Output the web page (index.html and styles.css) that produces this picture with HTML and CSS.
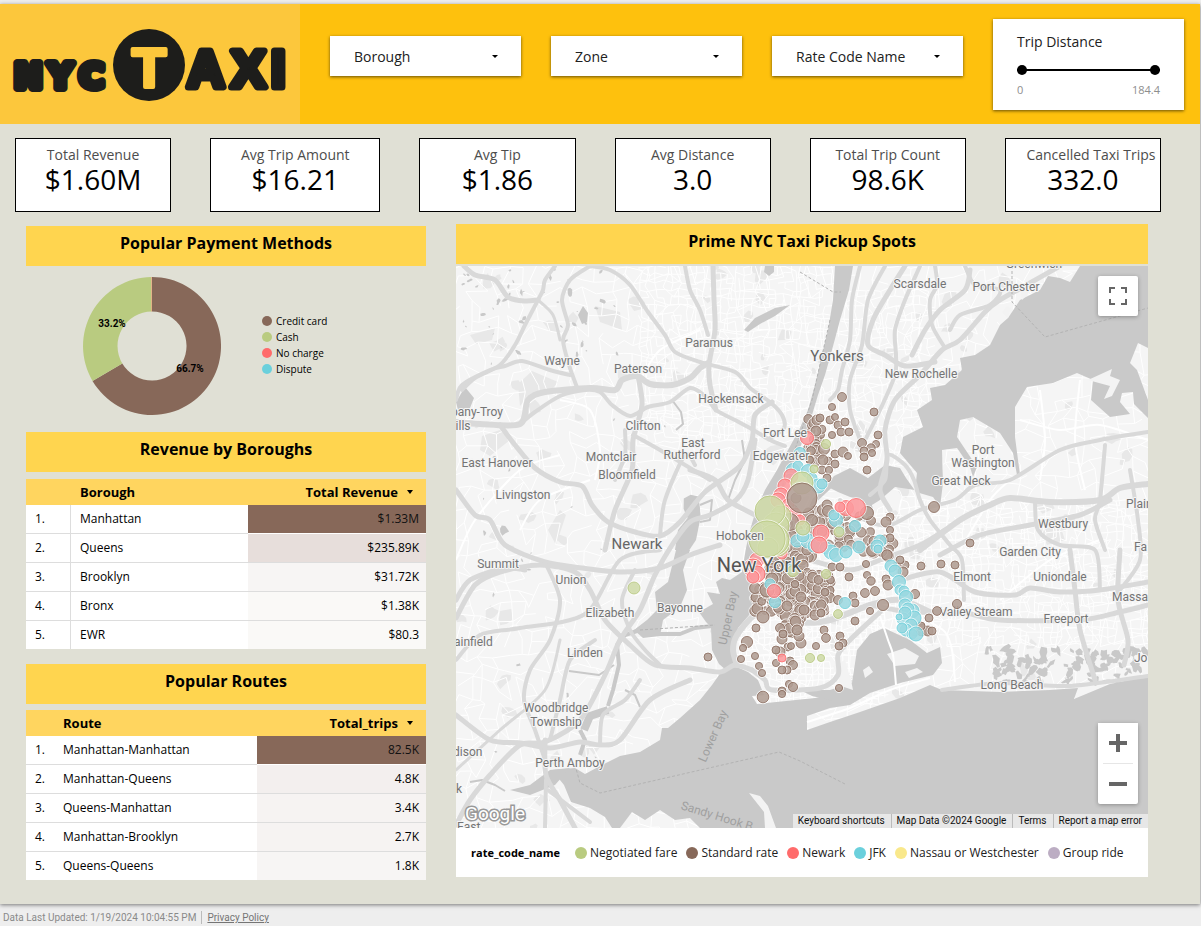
FILE: index.html
```html
<!DOCTYPE html>
<html lang="en">
<head>
<meta charset="utf-8">
<meta name="viewport" content="width=device-width, initial-scale=1">
<title>NYC Taxi Dashboard</title>
<link rel="stylesheet" href="styles.css">
</head>
<body>
<main class="report">
  <header class="header">
    <svg class="logo" viewBox="0 0 300 120" role="img" aria-label="NYC Taxi">
      <g class="logo-nyc"><text x="14" y="84">N</text><text x="48" y="84">Y</text><text x="79" y="84">C</text></g>
      <circle cx="149" cy="61" r="36" fill="#1d1d1b"/>
      <text class="logo-t" x="149" y="83">T</text>
      <g class="logo-axi"><text x="187" y="83">A</text><text x="231" y="83">X</text><text x="271" y="83">I</text></g>
    </svg>
    <div class="filters">
      <div class="filter"><select aria-label="Borough"><option>Borough</option></select><svg class="caret" viewBox="0 0 6 3"><path d="M0 0h6L3 3z"/></svg></div>
      <div class="filter"><select aria-label="Zone"><option>Zone</option></select><svg class="caret" viewBox="0 0 6 3"><path d="M0 0h6L3 3z"/></svg></div>
      <div class="filter"><select aria-label="Rate Code Name"><option>Rate Code Name</option></select><svg class="caret" viewBox="0 0 6 3"><path d="M0 0h6L3 3z"/></svg></div>
      <div class="distance">
        <label class="distance-label" for="dist-min">Trip Distance</label>
        <div class="range">
          <input id="dist-min" type="range" min="0" max="184.4" step="0.1" value="0">
          <input type="range" min="0" max="184.4" step="0.1" value="184.4" aria-label="Maximum trip distance">
        </div>
        <div class="range-ends"><span>0</span><span>184.4</span></div>
      </div>
    </div>
  </header>

  <section class="kpis">
    <div class="kpi"><div class="kpi-label">Total Revenue</div><div class="kpi-value">$1.60M</div></div>
    <div class="kpi"><div class="kpi-label">Avg Trip Amount</div><div class="kpi-value">$16.21</div></div>
    <div class="kpi"><div class="kpi-label">Avg Tip</div><div class="kpi-value">$1.86</div></div>
    <div class="kpi"><div class="kpi-label">Avg Distance</div><div class="kpi-value">3.0</div></div>
    <div class="kpi"><div class="kpi-label">Total Trip Count</div><div class="kpi-value">98.6K</div></div>
    <div class="kpi"><div class="kpi-label kpi-label-long">Cancelled Taxi Trips</div><div class="kpi-value">332.0</div></div>
  </section>

  <div class="columns">
    <div class="left">
      <h2 class="title">Popular Payment Methods</h2>
      <div class="payments">
        <svg class="donut" viewBox="-69 -69 138 138" role="img" aria-label="Payment methods">
          <path fill="#876859" d="M0-69A69 69 0 1 1-59.5 34.9L-29.7 17.5A34.5 34.5 0 1 0 0-34.5z"/>
          <path fill="#b9cb80" d="M-59.5 34.9A69 69 0 0 1-.7-69L-.3-34.5A34.5 34.5 0 0 0-29.7 17.5z"/>
          <path stroke="#f0a070" stroke-width=".6" d="M-.5-69v34.5"/>
          <text x="-40" y="-19">33.2%</text><text x="38" y="26">66.7%</text>
        </svg>
        <ul class="pay-legend">
          <li><i class="dot brown"></i>Credit card</li>
          <li><i class="dot green"></i>Cash</li>
          <li><i class="dot red"></i>No charge</li>
          <li><i class="dot blue"></i>Dispute</li>
        </ul>
      </div>

      <h2 class="title">Revenue by Boroughs</h2>
      <table class="data boroughs">
        <thead><tr><th class="num"></th><th>Borough</th><th class="val">Total Revenue<svg class="sort" viewBox="0 0 6 4"><path d="M0 0h6L3 4z"/></svg></th></tr></thead>
        <tbody>
          <tr><td class="num">1.</td><td>Manhattan</td><td class="val h1">$1.33M</td></tr>
          <tr><td class="num">2.</td><td>Queens</td><td class="val h2">$235.89K</td></tr>
          <tr><td class="num">3.</td><td>Brooklyn</td><td class="val h4">$31.72K</td></tr>
          <tr><td class="num">4.</td><td>Bronx</td><td class="val h5">$1.38K</td></tr>
          <tr><td class="num">5.</td><td>EWR</td><td class="val h5">$80.3</td></tr>
        </tbody>
      </table>

      <h2 class="title">Popular Routes</h2>
      <table class="data routes">
        <thead><tr><th class="num"></th><th>Route</th><th class="val">Total_trips<svg class="sort" viewBox="0 0 6 4"><path d="M0 0h6L3 4z"/></svg></th></tr></thead>
        <tbody>
          <tr><td class="num">1.</td><td>Manhattan-Manhattan</td><td class="val h1">82.5K</td></tr>
          <tr><td class="num">2.</td><td>Manhattan-Queens</td><td class="val h3">4.8K</td></tr>
          <tr><td class="num">3.</td><td>Queens-Manhattan</td><td class="val h6">3.4K</td></tr>
          <tr><td class="num">4.</td><td>Manhattan-Brooklyn</td><td class="val h6">2.7K</td></tr>
          <tr><td class="num">5.</td><td>Queens-Queens</td><td class="val h4">1.8K</td></tr>
        </tbody>
      </table>
    </div>

    <div class="right">
      <h2 class="title">Prime NYC Taxi Pickup Spots</h2>
      <div class="map">
        <svg class="map-canvas" viewBox="456 266 692 562" preserveAspectRatio="xMidYMid slice">
          <g id="parks" fill="#e8e8e8"></g>
          <g id="streets" fill="none" stroke="#fff" stroke-width="1"></g>
          <g id="ponds" fill="#c9c9c9"></g>
          <g fill="#c9c9c9">
            <path d="M835 266L833 300 828 330 822 355 815 385 808 410 799 430 788 450 777 470 765 490 756 510 750 530 746 548 742 572 730 580 722 578 716 582 720 594 707 592 713 604 699 612 706 622 711 627 712 650 719 664 726 670 737 664 733 645 738 628 750 614 756 600 753 585 762 565 770 530 776 505 790 475 803 440 812 415 818 395 825 375 832 350 840 320 849 290 853 266z"/>
            <path d="M676 550L690 550 683 570 687 590 680 607 663 620 660 636 643 638 634 630 647 620 657 610 655 592 668 582z"/>
            <path d="M675 550L678 530 690 515 700 520 696 540 688 552z"/>
            <path d="M724 668L712 685 700 700 680 718 668 728 662 728 660 740 640 752 620 756 600 766 585 774 575 768 552 770 564 785 571 802 590 808 605 817 612 828 620 828 632 812 645 820 660 810 675 820 690 818 700 828 1148 828 1148 676 1110 684 1074 699 1078 688 1050 690 1000 692 942 690 930 685 900 698 860 712 830 722 807 730 807 716 830 708 850 705 842 692 815 698 757 704 752 696 764 695 758 680 748 672 737 667z"/>
            <path d="M800 690L812 696 850 705 870 693 900 683 933 675 942 663 940 647 927 653 910 640 884 628 870 634 857 650 852 683 830 690z"/>
            <path d="M1080 266L1070 282 1060 278 1048 276 1040 290 1020 300 1008 318 1000 325 990 345 975 355 960 358 962 370 945 385 930 388 932 400 917 410 923 427 903 437 900 453 917 473 915 490 895 487 880 500 872 505 874 515 868 522 862 500 850 497 838 492 826 486 834 476 850 468 868 478 885 465 900 468 906 478 916 492 933 497 940 507 943 483 942 450 957 448 970 467 973 477 977 467 957 437 960 420 973 417 1000 433 1013 453 1017 475 1020 475 1015 437 1015 407 1027 387 1053 383 1077 373 1093 380 1091 400 1110 417 1130 414 1120 402 1122 393 1133 392 1134 404 1148 418 1148 400 1137 370 1130 363 1138 343 1148 348 1148 266z"/>
            <path d="M456 402L465 387 474 398 470 408 458 410zM744 330L755 318 775 308 790 305 775 316 760 324 748 332zM765 266h9l0 6-5 4-5-4zM578 315l5-9 5 7-1 9-5 2zM530 795L555 785 570 768 550 770 530 785 510 790z"/>
          </g>
          <g fill="none" stroke="#c9c9c9" stroke-linejoin="round">
            <path stroke-width="4" d="M655 634L680 634 695 628 712 626M640 630L625 635 617 645 619 665 613 690 608 706M580 730L585 740 580 755"/>
            <path stroke-width="8" d="M608 710L590 716 584 730"/>
            <path stroke-width="5" d="M832 484L815 500 804 525 792 545 770 562"/>
            <path stroke-width="2" d="M672 400L681 412 683 424 676 430M742 440L745 460 735 480 728 500M700 505l12-5-2 20-10 2M505 791L495 785 482 780 470 782M614 665l-15 10-30-4M625 690l10 5 5 12"/>
          </g>
          <g fill="#f3f3f3">
            <path d="M1088 380L1112 369 1110 376 1120 380 1112 396 1104 399 1110 386z"/>
            <path d="M749 793L760 796 768 806 776 828 765 828 764 812z"/>
            <path d="M887 654l18-6 14 8-4 8-20 2zM905 672l12-4 6 4-14 6zM863 670l6-4 4 6-8 6zM845 660l6 20 2 10-12-4-8-20z"/>
            <path d="M1020 290l6-4 2 8-6 6zM1002 312l5-6 4 2-3 10z"/>
          </g>
          <g id="marsh" fill="#c9c9c9"></g>
          <g id="minor" fill="none" stroke="#fff" stroke-width="2" stroke-linejoin="round"></g>
          <g id="roads" fill="none" stroke="#d9d9d9" stroke-linecap="round" stroke-linejoin="round"></g>
          <g fill="none" stroke="#b3b3b3" stroke-width="1" stroke-dasharray="3 2">
            <path d="M575 765L580 783 600 793 779 752 800 761 845 784M800 272L833 292 841 292M830 320L812 400 788 470 760 550M1012 266L1012 302 1045 337 1148 308M640 630L715 625"/>
          </g>
          <g id="labels" class="map-labels"></g>
          <g id="pickups"></g>
          <g class="map-labels map-city">
            <text x="759" y="572" class="metro">New York</text>
            <text x="781" y="460">Edgewater</text>
            <text x="785" y="437">Fort Lee</text>
            <text x="740" y="540">Hoboken</text>
          </g>
        </svg>
        <button class="map-button fullscreen" aria-label="Toggle fullscreen view"><svg viewBox="0 0 18 18" width="18" height="18"><path d="M0 0v6h2V2h4V0zM16 0h-4v2h4v4h2V0zM16 16h-4v2h6v-6h-2zM2 12H0v6h6v-2H2z"/></svg></button>
        <div class="zoom">
          <button class="map-button" aria-label="Zoom in"><svg viewBox="0 0 18 18" width="18" height="18"><path d="M18 7h-7V0H7v7H0v4h7v7h4v-7h7z"/></svg></button>
          <button class="map-button" aria-label="Zoom out"><svg viewBox="0 0 18 18" width="18" height="18"><path d="M0 7h18v4H0z"/></svg></button>
        </div>
        <div class="google">Google</div>
        <div class="attribution"><button>Keyboard shortcuts</button><span>Map Data ©2024 Google</span><a href="#">Terms</a><a href="#">Report a map error</a></div>
      </div>
      <ul class="map-legend">
        <li class="legend-name">rate_code_name</li>
        <li><i class="dot green"></i>Negotiated fare</li>
        <li><i class="dot brown"></i>Standard rate</li>
        <li><i class="dot red"></i>Newark</li>
        <li><i class="dot blue"></i>JFK</li>
        <li><i class="dot yellow"></i>Nassau or Westchester</li>
        <li><i class="dot purple"></i>Group ride</li>
      </ul>
    </div>
  </div>
</main>
<footer class="footer"><span>Data Last Updated: 1/19/2024 10:04:55 PM</span><a href="#">Privacy Policy</a></footer>
<script src="map.js"></script>
</body>
</html>
```

FILE: styles.css
```css
* { box-sizing: border-box; }
body { margin: 0; padding-top: 4px; background: #eee; font-family: "Open Sans", "Noto Sans", sans-serif; color: #000; }
ul { list-style: none; margin: 0; padding: 0; }
button { border: 0; padding: 0; font: inherit; color: inherit; background: none; cursor: pointer; }

.report { margin-right: 1px; padding-bottom: 24px; background: #e0e0d5; box-shadow: 0 1px 4px rgba(0,0,0,.5); }

.header { display: flex; height: 120px; background: #fec10d; }
.logo { flex: none; width: 300px; height: 120px; background: #fcc73c; }
.logo text { font-family: "Liberation Sans", Arial, sans-serif; font-weight: 700; font-size: 52px; fill: #1d1d1b; stroke: #1d1d1b; stroke-width: 7px; stroke-linejoin: round; }
.logo .logo-nyc text { font-family: "DejaVu Sans", sans-serif; font-size: 34px; stroke-width: 8px; }
.logo .logo-t { font-size: 56px; text-anchor: middle; fill: #fcc73c; stroke: #fcc73c; stroke-width: 4px; }

.filters { flex: 1; display: grid; grid-template-columns: repeat(4, 1fr); gap: 30px; align-items: start; padding: 15px 16px 0 30px; }
.filter, .distance { background: #fff; box-shadow: 0 1px 3px rgba(0,0,0,.6); }
.filter { display: grid; align-items: center; height: 40px; margin-top: 17px; }
.filter > * { grid-area: 1 / 1; }
.filter select { width: 100%; height: 40px; padding: 0 40px 0 24px; border: 0; appearance: none; background: transparent; font: 14px "Open Sans", sans-serif; color: #212121; }
.caret { justify-self: end; width: 6px; height: 3px; margin-right: 23px; }
.distance { padding: 13px 24px 10px; }
.distance-label { display: block; font-size: 14px; line-height: 20px; color: #212121; }
.range { display: grid; align-items: center; height: 20px; margin-top: 8px; background: linear-gradient(#000, #000) center / 100% 2px no-repeat; }
.range input { grid-area: 1 / 1; width: 100%; height: 20px; margin: 0; appearance: none; background: none; pointer-events: none; }
.range input::-webkit-slider-thumb { appearance: none; width: 10px; height: 10px; border-radius: 50%; background: #000; pointer-events: auto; }
.range-ends { display: flex; justify-content: space-between; font-size: 11px; line-height: 20px; color: #8e8e8e; }

.kpis { display: grid; grid-template-columns: 156fr 170fr repeat(4, 156fr); gap: 39px; padding: 14px 39px 0 15px; }
.kpi { height: 74px; padding-top: 6px; border: 1px solid #000; background: #fff; text-align: center; white-space: nowrap; }
.kpi-label { font-size: 14px; line-height: 20px; color: #4d4d4d; }
.kpi-label-long { padding-left: 16px; }
.kpi-value { font-size: 28px; line-height: 28px; }

.columns { display: grid; grid-template-columns: 400fr 692fr; gap: 30px; padding: 12px 52px 0 26px; }
.left { padding-top: 2px; }
.title { margin: 0; padding: 5px 0 11px; background: #ffd54f; font-size: 16px; line-height: 24px; font-weight: 700; text-align: center; }

.payments { display: flex; align-items: flex-start; gap: 41px; height: 166px; padding: 11px 0 0 57px; }
.donut { width: 138px; height: 138px; }
.donut text { font: bold 10px Roboto, sans-serif; text-anchor: middle; }
.pay-legend { padding-top: 36px; font-size: 10px; line-height: 16px; }
.pay-legend li, .map-legend li { display: flex; align-items: center; }
.dot { flex: none; width: 10px; height: 10px; margin-right: 4px; border-radius: 50%; }
.brown { background: #876859; }
.green { background: #b9cb80; }
.red { background: #ff6b6b; }
.blue { background: #6bd0dc; }
.yellow { background: #f9e88b; }
.purple { background: #bcadc3; }

.data { width: 100%; border-collapse: separate; border-spacing: 0; table-layout: fixed; background: #fff; font-size: 12px; line-height: 16px; }
.data th { height: 26px; padding: 0 9px; background: #ffd55f; font-size: 13px; text-align: left; }
.data td { height: 29px; padding: 0 9px; border-bottom: 1px solid #ddd; }
.data tbody tr:last-child td { border-bottom: 0; height: 28px; }
.data .val { text-align: right; padding-right: 7px; }
.data th.val { padding-right: 13px; white-space: nowrap; }
.sort { width: 6px; height: 4px; margin-left: 9px; vertical-align: 3px; }
.boroughs { margin: 7px 0 15px; }
.boroughs .num { width: 45px; }
.boroughs td.num { border-right: 1px solid #ddd; }
.boroughs .val { width: 178px; }
.routes { margin-top: 6px; }
.routes .num { width: 28px; padding-right: 0; }
.routes .val { width: 169px; }
.data .h1 { background: #876859; border-color: #fff; background-clip: padding-box; color: #111; }
.data .h2 { background: #e7dedb; }
.data .h3 { background: #f3efee; }
.data .h4 { background: #f7f5f4; }
.data .h5 { background: #faf9f7; }
.data .h6 { background: #f6f3f2; }

.map { position: relative; height: 562px; margin-top: 2px; overflow: hidden; background: #f5f5f5; font-family: Roboto, sans-serif; }
.map-canvas { display: block; width: 100%; height: 100%; }
.map-labels text { font: 12px Roboto, sans-serif; fill: #747474; stroke: #f5f5f5; stroke-width: 2px; stroke-linejoin: round; paint-order: stroke; text-anchor: middle; }
.map-labels .start { text-anchor: start; }
.map-labels .city { font-size: 15px; fill: #666; }
.map-labels .metro { font-size: 20px; fill: #555; }
.map-labels .sea { fill: #a0a0a0; stroke: none; }
.map-button { display: grid; place-items: center; width: 40px; height: 40px; background: #fff; fill: #666; }
.fullscreen, .zoom { position: absolute; right: 10px; border-radius: 2px; background: #fff; box-shadow: 0 1px 4px rgba(0,0,0,.3); }
.fullscreen { top: 10px; }
.zoom { bottom: 24px; }
.zoom .map-button + .map-button { border-top: 1px solid #e6e6e6; width: 30px; height: 41px; margin: 0 5px; }
.google { position: absolute; left: 9px; bottom: 1px; font-family: Roboto, sans-serif; font-size: 19px; line-height: 26px; color: #fff; -webkit-text-stroke: 3px #999; paint-order: stroke fill; }
.attribution { position: absolute; right: 0; bottom: 0; display: flex; height: 14px; background: #e7e7e7; font-size: 10px; line-height: 14px; color: #111; white-space: nowrap; }
.attribution > * { padding: 0 6px 0 5px; color: inherit; text-decoration: none; }
.attribution > * + * { border-left: 1px solid #bbb; }
.map-legend { display: flex; align-items: center; flex-wrap: wrap; gap: 0 9px; min-height: 49px; padding: 0 15px; background: #fff; font-size: 12px; line-height: 16px; color: #212121; }
.map-legend .legend-name { margin-right: 6px; font-size: 11px; font-weight: 700; color: #000; }
.map-legend .dot { width: 12px; height: 12px; margin-right: 3px; }

.footer { display: flex; align-items: center; padding: 7px 3px 0; font: 10px/13px Roboto, sans-serif; color: #8a8a8a; }
.footer a { margin-left: 5px; padding-left: 5px; border-left: 1px solid #bbb; color: #757575; }
```

FILE: map.js
```js
const NS = 'http://www.w3.org/2000/svg';
function add(parent, tag, attrs, text) {
  const el = document.createElementNS(NS, tag);
  for (const k in attrs) el.setAttribute(k, attrs[k]);
  if (text) el.textContent = text;
  document.getElementById(parent).appendChild(el);
  return el;
}

let seed = 7;
function rnd() { seed = (seed * 16807) % 2147483647; return seed / 2147483647; }

// Smooth curve through a flat list of coordinates.
function smooth(str) {
  const n = str.split(/[ ,]+/).map(Number), p = [];
  for (let i = 0; i < n.length; i += 2) p.push([n[i], n[i + 1]]);
  let d = 'M' + p[0];
  for (let i = 0; i < p.length - 1; i++) {
    const a = p[i - 1] || p[i], b = p[i], c = p[i + 1], e = p[i + 2] || c;
    d += 'C' + [b[0] + (c[0] - a[0]) / 7, b[1] + (c[1] - a[1]) / 7, c[0] - (e[0] - b[0]) / 7, c[1] - (e[1] - b[1]) / 7, c[0], c[1]].map(v => v.toFixed(1)).join(' ');
  }
  return d;
}

function blob(x, y, r, stretch) {
  let d = '';
  const turn = rnd() * 3;
  for (let i = 0; i < 8; i++) {
    const a = i * Math.PI / 4, q = r * (0.5 + rnd() * 0.7);
    const u = Math.cos(a) * q, v = Math.sin(a) * q * stretch;
    d += (i ? 'L' : 'M') + (x + u * Math.cos(turn) - v * Math.sin(turn)).toFixed(1) + ' ' + (y + u * Math.sin(turn) + v * Math.cos(turn)).toFixed(1);
  }
  return d + 'z';
}

// Local street mesh: a jittered grid with gaps.
function mesh(x0, y0, x1, y1, step, jitter, keep) {
  const cols = Math.ceil((x1 - x0) / step), rows = Math.ceil((y1 - y0) / step), g = [];
  for (let r = 0; r <= rows; r++) {
    g.push([]);
    for (let c = 0; c <= cols; c++) g[r].push([(x0 + c * step + (rnd() - 0.5) * jitter).toFixed(1), (y0 + r * step + (rnd() - 0.5) * jitter).toFixed(1)]);
  }
  let d = '';
  for (let r = 0; r <= rows; r++) for (let c = 0; c <= cols; c++) {
    if (c < cols && rnd() < keep) d += 'M' + g[r][c] + 'L' + g[r][c + 1];
    if (r < rows && rnd() < keep) d += 'M' + g[r][c] + 'L' + g[r + 1][c];
  }
  add('streets', 'path', { d });
}
mesh(456, 266, 1148, 828, 13, 12, 0.7);
mesh(640, 266, 830, 440, 8, 4, 0.7);
mesh(740, 560, 880, 700, 6, 2, 0.8);
mesh(860, 500, 1148, 640, 8, 4, 0.75);
mesh(840, 290, 930, 470, 8, 5, 0.7);

let parks = '';
for (let i = 0; i < 150; i++) parks += blob(456 + rnd() * 692, 266 + rnd() * 562, 3 + rnd() * 8, 0.7);
parks += 'M595 306L620 312 622 330 600 322zM518 384L532 371 558 382 550 392 530 394 520 406zM482 436L500 430 510 440 490 456 480 450zM548 530L560 510 566 515 556 545zM470 335L495 328 492 340 476 344zM1040 530l20-5 5 15-18 5z';
add('parks', 'path', { d: parks });

let ponds = '';
for (let i = 0; i < 45; i++) ponds += blob(458 + rnd() * 170, 268 + rnd() * 105, 1 + rnd() * 3, 0.5);
for (let i = 0; i < 20; i++) ponds += blob(456 + rnd() * 240, 400 + rnd() * 400, 1 + rnd() * 2.5, 0.5);
ponds += blob(692, 508, 14, 0.7) + blob(504, 530, 5, 0.9) + blob(570, 293, 5, 0.6) + blob(602, 301, 4, 0.7);
add('ponds', 'path', { d: ponds });

let marsh = '';
for (let i = 0; i < 90; i++) {
  const x = 985 + rnd() * 160;
  marsh += blob(x, 648 + rnd() * 28, 3 + rnd() * 4, 0.6);
}
for (let i = 0; i < 14; i++) marsh += blob(1000 + rnd() * 145, 680 + rnd() * 3, 6, 0.3);
add('marsh', 'path', { d: marsh });

[
  '880 616,888 640,893 655,896 685', '930 622,945 632,952 650,955 682', '807 722,850 708,890 690,930 678',
  '456 560,475 520,520 470,560 455', '560 400,590 410,600 450,595 480', '520 530,540 500,590 480', '700 330,660 350,640 380',
  '1000 600,1050 560,1100 540', '1020 420,1060 430,1100 425,1148 440', '1040 390,1045 440,1040 480', '1080 380,1075 440,1085 490', '960 550,990 500,1010 480'
].forEach(s => add('minor', 'path', { d: smooth(s) }));

[
  [5, '464 266,475 275,495 280,508 297,525 301,538 300'],
  [4, '555 266,545 280,543 290,538 300,525 325,515 345,500 365,475 378,462 390'],
  [4, '590 266,570 280,562 300,568 325,563 340,569 365,578 390'],
  [3, '538 300,553 315,560 340'],
  [4, '456 400,462 385,490 370,505 366,522 361,550 370,570 375'],
  [6, '456 422,480 424,520 424,528 400,545 392,590 388,615 390,622 380,637 376,650 384,672 385,690 378,700 368,708 363'],
  [4, '520 424,535 412,560 396,585 390,600 392,612 405,630 416,648 407,670 402,690 388,705 396,716 410,735 420,750 428,770 440,785 446'],
  [4, '590 266,610 270,630 285,648 312,665 335,675 352,700 362,735 372,750 388,770 402,782 415,784 428,770 438'],
  [5, '713 266,714 300,715 330,709 365,710 385,716 410'],
  [4, '685 266,690 290,700 310,708 335'],
  [5, '638 376,642 405,633 440,632 470,615 510,605 550'],
  [4, '710 480,690 468,660 450,633 435'],
  [5, '500 425,515 445,535 468,560 482,582 486,592 505,608 522,635 532,660 536,680 522,705 492,740 466,752 440,755 415,772 402'],
  [5, '690 470,715 480,728 500,755 515'],
  [5, '456 490,475 515,490 520,505 545,545 562,582 568,622 572,660 568,690 555,720 545'],
  [5, '755 440,748 480,736 500,710 515,690 522,672 545,655 575,640 610,620 640,605 675,580 720,545 742,520 745,490 775,470 800,456 825'],
  [4, '660 535,665 500,685 455,695 465'],
  [4, '635 570,622 600,630 630,645 650,660 665'],
  [5, '456 618,475 585,500 572,540 565,575 572,590 590,605 620,630 645,655 665,690 668,720 672,735 665,752 670'],
  [4, '456 660,480 635,520 628,585 614,620 560,660 550'],
  [4, '545 562,560 600,550 640,530 670,524 700,535 730,545 760'],
  [5, '456 715,490 740,520 743,550 748,580 742,600 745,620 740,650 700,690 680'],
  [5, '545 740,546 775,560 800,575 828'],
  [4, '546 780,545 828'], [4, '548 790,565 803,590 822'],
  [4, '595 640,570 660,560 700,550 740'], [3, '456 770,500 730,545 690,560 640'],
  [4, '600 745,603 715,625 700,640 680'],
  [5, '456 600,470 580,505 568,525 570'],
  [4, '625 430,625 455,615 480'],
  [6, '737 665,733 650,737 635,755 615,780 610,800 622,830 620,870 605,900 600,930 612'],
  [5, '752 670,765 680,772 690,820 688,838 675,838 655,850 640,880 612'],
  [4, '860 266,852 300,850 340,842 370,838 390,830 400'],
  [4, '885 266,868 300,862 345,850 380,850 410,860 440'],
  [5, '905 266,890 290,873 320,868 345,885 355,905 366,935 362'],
  [4, '920 266,905 300,895 330,896 355,895 375,880 410,860 450'],
  [5, '1060 266,1030 283,1000 300,985 312,960 340,942 350,920 375,895 400,885 430,887 460,880 490,890 510'],
  [4, '935 266,937 285,930 300,932 325,945 348'],
  [4, '965 266,975 285,1000 290,990 305,960 315,950 330'],
  [5, '912 355,925 330,940 310,965 290,970 270'],
  [4, '870 495,885 480,888 455,905 465,914 480,920 500,930 520,950 545,962 560,964 600'],
  [4, '840 500,865 520,890 525,920 510,955 500,975 485,1010 480,1060 450,1100 440,1148 432'],
  [6, '920 550,960 520,990 505,1010 498,1050 502,1100 500,1120 488,1148 484'],
  [5, '940 555,980 535,1030 525,1080 515,1110 500'],
  [4, '1035 500,1038 530,1060 545,1095 550,1100 590'],
  [4, '1105 445,1100 500,1095 520,1105 550'],
  [5, '1070 550,1075 590,1080 630,1095 680'],
  [5, '1120 550,1118 600,1128 640,1124 665'],
  [4, '1130 470,1138 520,1140 560,1120 590'],
  [5, '900 580,940 572,975 592,1015 595,1030 588,1060 592,1100 590,1148 582'],
  [5, '870 605,910 612,960 612,1000 620,1080 620,1120 612,1148 605'],
  [5, '810 560,850 570,880 560,920 545,945 530'],
  [4, '780 545,820 550,860 540,890 550,900 580'],
  [4, '942 690,1000 683,1070 686,1148 676']
].forEach(([w, s]) => add('roads', 'path', { d: smooth(s), 'stroke-width': w }));

[
  [920, 288, 'Scarsdale'], [1006, 291, 'Port Chester'], [1034, 268, 'Greenwich'], [709, 347, 'Paramus'], [837, 361, 'Yonkers', 'city'],
  [562, 365, 'Wayne'], [638, 373, 'Paterson'], [921, 378, 'New Rochelle'], [731, 403, 'Hackensack'], [451, 416, 'pany-Troy', 'start'],
  [447, 430, 'Hills', 'start'], [643, 430, 'Clifton'], [693, 447, 'East'], [692, 459, 'Rutherford'], [983, 454, 'Port'], [983, 467, 'Washington'],
  [611, 461, 'Montclair'], [497, 467, 'East Hanover'], [627, 479, 'Bloomfield'], [961, 485, 'Great Neck'], [523, 499, 'Livingston'],
  [1126, 508, 'Plain', 'start'], [1063, 528, 'Westbury'], [637, 549, 'Newark', 'city'], [1030, 556, 'Garden City'], [1134, 551, 'Fa', 'start'],
  [498, 568, 'Summit'], [571, 584, 'Union'], [972, 581, 'Elmont'], [1060, 581, 'Uniondale'], [1112, 601, 'Massa', 'start'],
  [610, 617, 'Elizabeth'], [680, 612, 'Bayonne'], [976, 616, 'Valley Stream'], [1066, 623, 'Freeport'], [454, 646, 'ainfield', 'start'],
  [585, 657, 'Linden'], [1134, 662, 'Jo', 'start'], [1012, 689, 'Long Beach'], [556, 712, 'Woodbridge'], [556, 726, 'Township'],
  [453, 756, 'dison', 'start'], [570, 767, 'Perth Amboy'], [456, 793, 'k', 'start'], [457, 831, 'East', 'start']
].forEach(([x, y, t, c]) => add('labels', 'text', { x, y, class: c || '' }, t));
[[728, 618, -78, 'Upper Bay'], [713, 736, -66, 'Lower Bay'], [717, 816, 17, 'Sandy Hook B']].forEach(([x, y, a, t]) =>
  add('labels', 'text', { x, y: y + 4, class: 'sea', transform: `rotate(${a} ${x} ${y})` }, t));

// Fill and outline per rate code.
const TONES = { n: ['#b09d93', '#876859'], g: ['#cfdba8', '#b5c77c'], r: ['#fc9a9d', '#ff6b6b'], b: ['#9bd8e0', '#6bd0dc'] };
function pickup(x, y, r, tone) {
  const [fill, stroke] = TONES[tone];
  add('pickups', 'circle', { cx: x, cy: y, r: r + 0.9, fill: 'none', stroke: '#fff', 'stroke-width': 0.9, 'stroke-opacity': 0.85 });
  add('pickups', 'circle', { cx: x, cy: y, r, fill, 'fill-opacity': 0.88, stroke, 'stroke-width': 0.9, 'stroke-opacity': 0.85 });
}
function scatter(n, x0, y0, x1, y1, r, tone) {
  for (let i = 0; i < n; i++) pickup(x0 + rnd() * (x1 - x0), y0 + rnd() * (y1 - y0), r + rnd() * 1.8, tone);
}
function plot(tone, list) {
  list.split(' ').forEach(s => { const [x, y, r] = s.split(',').map(Number); pickup(x, y, r, tone); });
}

// Dense neighbourhoods.
scatter(24, 808, 418, 823, 465, 3.5, 'n');
scatter(40, 786, 505, 832, 548, 4, 'n');
scatter(32, 832, 512, 872, 552, 3.5, 'n');
scatter(50, 770, 545, 814, 576, 4.5, 'n');
scatter(110, 764, 572, 831, 606, 3.6, 'n');
scatter(24, 754, 586, 780, 612, 3.8, 'n');
scatter(18, 804, 604, 828, 613, 3.5, 'n');
scatter(30, 776, 606, 803, 634, 3.8, 'n');
scatter(12, 868, 534, 893, 556, 4, 'n');

plot('n', '842,397,4.5 832,407,3.6 874,412,4 817,420,5 820,418,4 830,420,4 835,417,3.5 838,425,4 845,422,4 841,432,4 849,432,4 816,431,5 832,435,3.6 878,435,4 862,443,4.5 876,444,3.6 871,448,4.2 864,451,4 872,453,3.6 864,457,4 867,470,4 824,449,5.5 835,454,4 843,452,5 848,456,3.5 828,461,4 823,460,5 835,464,4 822,470,4 829,470,3.6 827,478,4 934,507,5.5 890,517,4 886,522,5 890,530,3.6 890,538,4 867,513,6.5 827,505,5 828,511,5.5 970,543,4');
plot('n', '832,567,4 840,567,4 866,564,3.6 905,565,4 897,566,4 941,564,4 955,565,4 921,566,4 849,577,4 867,575,3.6 871,581,4.2 886,579,4 888,585,5 865,593,4.5 875,591,4.5 853,596,4 855,603,4 870,611,3.6 838,600,4.5 883,605,5.6 855,621,4 915,594,4.6 957,604,4.6 937,611,4.4 929,618,4 903,572,5 900,560,4 747,642,5.6 743,648,3.6 763,617,6 756,628,4 780,628,4.5 782,639,5 783,634,4 801,643,5 799,636,5 788,647,4 780,652,5 776,650,4 791,646,3.5 824,630,4 826,638,4.4 840,636,4 843,643,4 839,646,4 816,646,3.6 708,657,4 741,659,3.6 755,656,3.6 759,666,3.6 762,673,3.6 776,663,3.6 790,661,4 793,665,4.5 787,670,4 782,670,4 763,697,5.8 789,684,3.6 793,687,4.6 782,691,4 782,694,3.6 839,688,3.6 797,630,5 804,610,5 815,615,5 821,613,4 772,579,6 787,606,5 767,590,7 915,630,6 922,630,6 928,631,5 932,631,4 921,626,4');
plot('b', '800,453,5.5 793,470,6.5 798,466,5 790,478,4 808,471,6.5 812,478,5 818,486,7 822,484,5 797,541,6 808,541,7 803,536,6 814,546,6 836,520,6.5 834,515,5 855,526,5.5 840,530,4 826,548,6 831,552,7 836,555,6.5 846,552,6 859,547,6 880,541,6 877,546,6 878,549,4 790,569,5 770,584,5 775,602,5.6 845,603,5.6 891,566,6 895,571,6 899,582,6.5 900,590,5 904,591,5 906,597,6.5 905,605,6 912,611,7 908,609,6 914,618,7 903,619,6 905,613,6 911,625,6 906,630,6 912,634,5 899,617,3 902,628,5 916,634,7');
plot('r', '807,438,6.5 791,476,7 785,486,7 781,495,7 778,500,7 788,505,6 786,512,7 795,514,6 800,520,5 757,560,7 753,568,9 757,574,8 753,577,6 782,554,5 774,591,6.5 782,658,4 846,508,7.5 856,508,9.5 821,533,8 819,545,8 840,507,5');
plot('n', '790,522,8.5 796,498,5 812,520,5.5');
plot('g', '826,444,4.6 814,469,4 839,532,5 803,528,7 802,483,11 793,571,5.5 826,574,4.6 838,614,4.4 810,658,4.6 821,658,3.6 634,588,6 781,516,10 776,526,13 770,511,15 778,545,11 774,540,15 768,548,10 767,539,18');
plot('n', '802,498,15');
```
